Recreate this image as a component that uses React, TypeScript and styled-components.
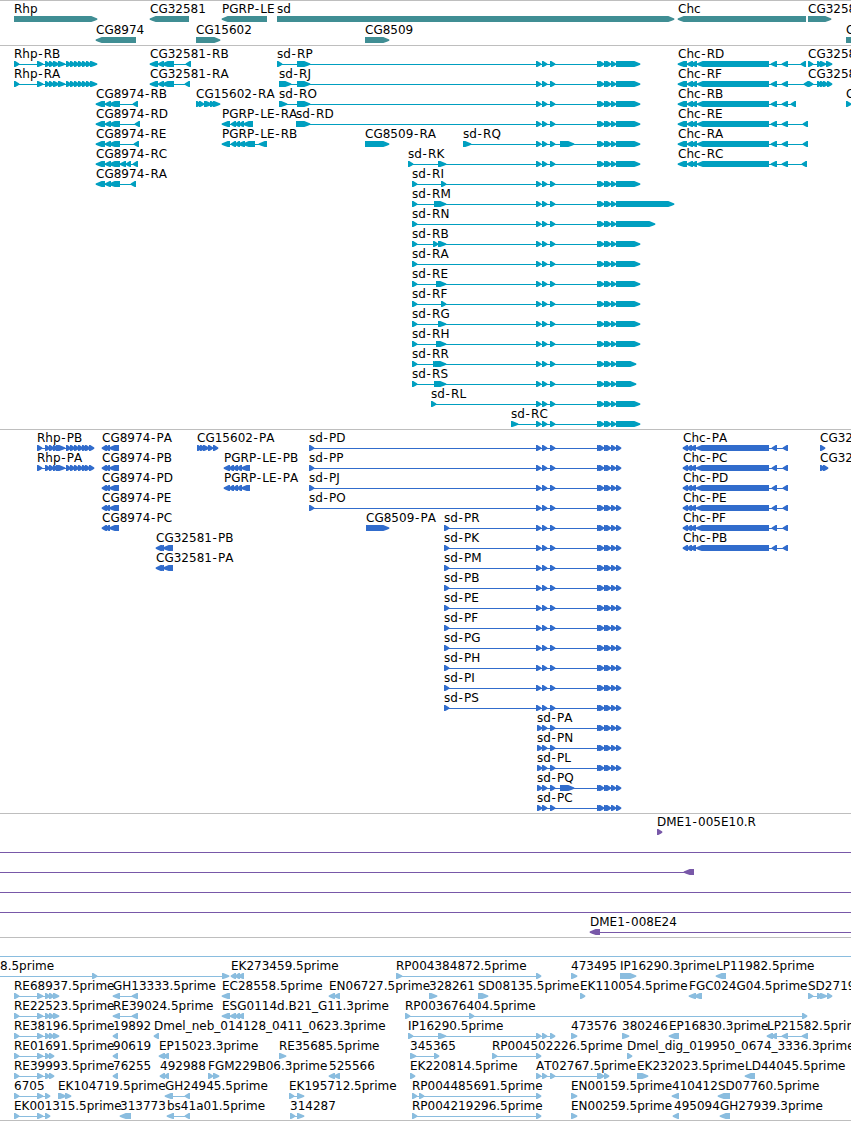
import React from "react";
import styled, { createGlobalStyle } from "styled-components";

const GlobalStyle = createGlobalStyle`
  body { margin: 0; background: #fff; overflow: hidden; }
`;

const Browser = styled.main`
  display: flex;
  flex-direction: column;
  width: 851px;
  height: 1121px;
  overflow: hidden;
  background: #fff;
  border-top: 1px solid #bebebe;
  box-sizing: border-box;
`;

const Track = styled.section<{ $color: string; $bottom: number }>`
  display: flex;
  flex-direction: column;
  flex: none;
  padding: 1px 0 ${(p) => p.$bottom}px;
  border-bottom: 1px solid #bebebe;
  color: ${(p) => p.$color};
`;

const Lane = styled.svg<{ $height: number }>`
  display: block;
  flex: none;
  width: 851px;
  height: ${(p) => p.$height}px;
  overflow: visible;
  fill: currentColor;
`;

const Label = styled.text`
  font: 12px "DejaVu Sans", Verdana, sans-serif;
  font-kerning: none;
  fill: #000;
  white-space: pre;
`;

type Feature = {
  label: string;
  x: number;
  dir: 1 | -1;
  exons: [number, number][];
  from: number;
  to: number;
};

/** Builds a feature from its name, strand and a "start-end start-end" exon list. */
function ft(label: string, strand: "+" | "-", exons: string, opts: { x?: number; from?: number; to?: number } = {}): Feature {
  const list = exons.split(" ").map((e) => e.split("-").map(Number) as [number, number]);
  return {
    label,
    dir: strand === "+" ? 1 : -1,
    exons: list,
    x: opts.x ?? list[0][0],
    from: opts.from ?? list[0][0],
    to: opts.to ?? list[list.length - 1][1],
  };
}

const line = (from = 0, to = 851): Feature => ({ label: "", x: 0, dir: 1, exons: [], from, to });

/** Outline of an exon: a box whose leading end tapers to a blunt point. */
function exonPoints([a, b]: [number, number], dir: 1 | -1) {
  const tip = Math.min(b - a - 1, 6);
  const [tail, head] = dir === 1 ? [a, b + 0.3] : [b, a - 0.3];
  const neck = head - dir * tip;
  const mid = head - dir * tip * 0.4;
  return `${tail},14 ${neck},14 ${mid},15.4 ${head},16.4 ${head},17.8 ${mid},18.7 ${neck},20 ${tail},20`;
}

/** Gives hyphens a little room on both sides. */
function hyphenGaps(label: string) {
  if (!label.includes("-")) return undefined;
  return [...label].map((c, i) => (c === "-" ? 0.7 : label[i - 1] === "-" ? 1.1 : 0)).join(" ");
}

const FeatureGlyph = ({ f }: { f: Feature }) => (
  <g>
    {(f.exons.length !== 1 || f.from !== f.exons[0][0] || f.to !== f.exons[0][1]) && (
      <rect x={f.from} y={17} width={f.to - f.from} height={1} shapeRendering="crispEdges" />
    )}
    {f.exons.map((e, i) => (
      <polygon key={i} points={exonPoints(e, f.dir)} />
    ))}
    {f.label && <Label x={f.x} y={11} dx={hyphenGaps(f.label)}>{f.label}</Label>}
  </g>
);

const TrackView = ({ color, rows, rowHeight = 20, bottom = 2 }: { color: string; rows: Feature[][]; rowHeight?: number; bottom?: number }) => (
  <Track $color={color} $bottom={bottom}>
    {rows.map((row, i) => (
      <Lane key={i} $height={rowHeight}>
        {row.map((f, j) => (
          <FeatureGlyph key={j} f={f} />
        ))}
      </Lane>
    ))}
  </Track>
);

const genes: Feature[][] = [
  [
    ft("Rhp", "+", "14-97"),
    ft("CG32581", "-", "150-189"),
    ft("PGRP-LE", "-", "222-267"),
    ft("sd", "+", "277-674"),
    ft("Chc", "-", "678-806"),
    ft("CG3258", "+", "808-831"),
  ],
  [
    ft("CG8974", "-", "96-136"),
    ft("CG15602", "+", "196-220"),
    ft("CG8509", "+", "365-389"),
    ft("C", "+", "846-870"),
  ],
];

const rhpR = "14-19 37-43 45-50 49-54 53-59 58-65 66-71 70-75 74-79 78-83 82-87 86-91 90-97";
const sdMid = "536-541 542-547 550-555";
const sdEnd = "597-602 599-604 604-609 606-611 611-616";
const sdR = (n: string, head: string, end = 640, extra = "") =>
  ft(`sd-${n}`, "+", `${head} ${sdMid}${extra} ${sdEnd} 616-${end}`);
const chcR = (n: string, tail: string) => ft(`Chc-${n}`, "-", `678-687 687-693 691-697 697-769 771-777 782-788 ${tail}`);
const cg8974R = (n: string, tail: string) => ft(`CG8974-${n}`, "-", `96-105 105-111 109-120 ${tail}`);

const transcripts: Feature[][] = [
  [
    ft("Rhp-RB", "+", rhpR),
    ft("CG32581-RB", "-", "150-158 158-164 162-174 186-191"),
    sdR("RP", "277-282 297-310"),
    chcR("RD", "801-806"),
    ft("CG3258", "+", "808-813 817-822 820-826 826-832"),
  ],
  [
    ft("Rhp-RA", "+", rhpR),
    ft("CG32581-RA", "-", "150-158 158-164 162-174 185-190"),
    sdR("RJ", "279-291 297-310"),
    chcR("RF", "804-809"),
    ft("CG3258", "+", "808-813 817-822 820-825 823-828 827-832"),
  ],
  [
    cg8974R("RB", "133-138"),
    ft("CG15602-RA", "+", "196-201 199-204 204-212 210-215 213-220"),
    sdR("RO", "279-287 297-310"),
    chcR("RB", "791-796"),
    ft("C", "+", "846-851"),
  ],
  [
    cg8974R("RD", "135-140"),
    ft("PGRP-LE-RA", "-", "222-230 231-236 235-240 239-244 243-253"),
    sdR("RD", "296-310"),
    chcR("RE", "803-808"),
  ],
  [
    cg8974R("RE", "134-139"),
    ft("PGRP-LE-RB", "-", "222-230 231-236 235-240 238-245 243-255 259-267"),
    ft("CG8509-RA", "+", "365-389"),
    sdR("RQ", "463-471", 640, " 560-574"),
    chcR("RA", "803-808"),
  ],
  [cg8974R("RC", "120-126 126-131 133-138"), sdR("RK", "408-413 438-446"), chcR("RC", "802-807")],
  [cg8974R("RA", "131-136"), sdR("RI", "412-417 441-446")],
  [sdR("RM", "412-417 434-446", 674)],
  [sdR("RN", "412-417", 655)],
  [sdR("RB", "412-417 433-438 438-446")],
  [sdR("RA", "412-417")],
  [sdR("RE", "412-417 436-446")],
  [sdR("RF", "412-417 441-446")],
  [sdR("RG", "412-417 438-446")],
  [sdR("RH", "412-417 436-446")],
  [sdR("RR", "412-417 433-438 435-446", 636)],
  [sdR("RS", "412-417 434-446", 636)],
  [sdR("RL", "431-436")],
  [sdR("RC", "511-518")],
];

const rhpP = "37-42 45-50 49-54 53-58 56-65 66-71 70-75 74-79 78-83 82-87 85-90 89-94";
const sdP = (n: string, head: string, mid = sdMid) => ft(`sd-${n}`, "+", `${head}${mid} ${sdEnd} 616-621`);
const chcP = (n: string) => ft(`Chc-${n}`, "-", "683-688 687-692 690-696 696-769 772-777 783-788");
const cg8974P = (n: string) => ft(`CG8974-${n}`, "-", "102-107 105-110 109-119");
const pgrpP = (n: string) => ft(`PGRP-LE-${n}`, "-", "224-230 229-234 233-238 237-242 241-250");
const cg32581P = (n: string) => ft(`CG32581-${n}`, "-", "156-162 159-164 163-173");
const shortMid = "537-542 542-547 550-555";

const proteins: Feature[][] = [
  [
    ft("Rhp-PB", "+", rhpP),
    cg8974P("PA"),
    ft("CG15602-PA", "+", "197-202 200-205 203-209 208-213 213-218"),
    sdP("PD", "309-314 "),
    chcP("PA"),
    ft("CG32", "+", "820-825"),
  ],
  [ft("Rhp-PA", "+", rhpP), cg8974P("PB"), pgrpP("PB"), sdP("PP", "309-314 "), chcP("PC"), ft("CG32", "+", "820-825 823-828")],
  [cg8974P("PD"), pgrpP("PA"), sdP("PJ", "309-314 "), chcP("PD")],
  [cg8974P("PE"), sdP("PO", "309-314 "), chcP("PE")],
  [cg8974P("PC"), ft("CG8509-PA", "+", "366-389"), sdP("PR", "444-449 "), chcP("PF")],
  [cg32581P("PB"), sdP("PK", "444-449 "), chcP("PB")],
  [cg32581P("PA"), sdP("PM", "444-449 ")],
  ...["PB", "PE", "PF", "PG", "PH", "PI", "PS"].map((n) => [sdP(n, "444-449 ")]),
  [sdP("PA", "", shortMid)],
  [sdP("PN", "", shortMid)],
  [sdP("PL", "", shortMid)],
  [sdP("PQ", "", shortMid + " 560-574")],
  [sdP("PC", "", shortMid)],
];

const clones: Feature[][] = [
  [ft("DME1-005E10.R", "+", "657-662")],
  [line()],
  [ft("", "-", "684-694", { from: 0 })],
  [line()],
  [line()],
  [ft("DME1-008E24", "-", "590-600", { to: 851 })],
];

const re5 = "14-19 37-43 45-50 49-54 53-59";
const re4 = "14-19 37-43 45-50 49-54";
const re3 = "14-19 37-43 45-50";

const ests: Feature[][] = [
  [line()],
  [
    ft("8.5prime", "+", "92-97 222-229", { x: 0, from: 0 }),
    ft("EK273459.5prime", "-", "231-236 235-240 238-244"),
    ft("RP004384872.5prime", "+", "396-402 536-541"),
    ft("473495", "+", "571-577"),
    ft("IP16290.3prime", "+", "620-636"),
    ft("LP11982.5prime", "-", "716-726"),
  ],
  [
    ft("RE68937.5prime", "+", re5),
    ft("GH13333.5prime", "-", "113-120 132-138"),
    ft("EC28558.5prime", "-", "222-230"),
    ft("EN06727.5prime", "-", "329-335 334-340"),
    ft("328261", "+", "429-437"),
    ft("SD08135.5prime", "+", "478-488"),
    ft("EK110054.5prime", "+", "580-585"),
    ft("FGC024G04.5prime", "-", "689-696 694-702"),
    ft("SD2719", "+", "808-813 817-823 820-827 827-832"),
  ],
  [
    ft("RE22523.5prime", "+", re5),
    ft("RE39024.5prime", "-", "113-120 132-138"),
    ft("ESG0114d.B21_G11.3prime", "-", "222-230 230-236 235-240 238-244"),
    ft("RP003676404.5prime", "+", "405-410 469-474 802-807"),
  ],
  [
    ft("RE38196.5prime", "+", re5),
    ft("19892", "-", "113-118"),
    ft("Dmel_neb_014128_0411_0623.3prime", "-", "154-159"),
    ft("IP16290.5prime", "+", "408-413 438-446 536-541 542-547 550-555"),
    ft("473576", "+", "571-577"),
    ft("380246", "+", "622-629"),
    ft("EP16830.3prime", "-", "669-679"),
    ft("LP21582.5prime", "-", "767-773 771-777 782-788 802-808"),
  ],
  [
    ft("RE01691.5prime", "+", re4),
    ft("90619", "-", "113-118"),
    ft("EP15023.3prime", "-", "159-165 163-169"),
    ft("RE35685.5prime", "+", "279-286"),
    ft("345365", "+", "410-416 434-439"),
    ft("RP004502226.5prime", "+", "492-497 536-541"),
    ft("Dmel_dig_019950_0674_3336.3prime", "+", "627-632"),
  ],
  [
    ft("RE39993.5prime", "+", re4),
    ft("76255", "-", "113-118"),
    ft("492988", "-", "160-165 164-169"),
    ft("FGM229B06.3prime", "+", "208-213 213-219"),
    ft("525566", "-", "329-335 334-340"),
    ft("EK220814.5prime", "+", "410-415"),
    ft("AT02767.5prime", "+", "536-541 542-547 550-555 597-602 599-604 604-609"),
    ft("EK232023.5prime", "+", "637-648"),
    ft("LD44045.5prime", "-", "745-755"),
  ],
  [
    ft("6705", "+", re3),
    ft("EK104719.5prime", "+", "58-66 65-71"),
    ft("GH24945.5prime", "-", "165-173 185-190"),
    ft("EK195712.5prime", "+", "289-294 297-304"),
    ft("RP004485691.5prime", "+", "412-417 419-424 536-541"),
    ft("EN00159.5prime", "+", "571-577"),
    ft("410412", "-", "672-679"),
    ft("SD07760.5prime", "-", "718-730"),
  ],
  [
    ft("EK001315.5prime", "+", re3),
    ft("313773", "-", "120-131"),
    ft("bs41a01.5prime", "-", "167-174 185-190"),
    ft("314287", "+", "290-295 297-304"),
    ft("RP004219296.5prime", "+", "412-417 536-541"),
    ft("EN00259.5prime", "+", "571-577"),
    ft("495094", "-", "673-679", { x: 674 }),
    ft("GH27939.3prime", "-", "720-730"),
  ],
];

export default function App() {
  return (
    <>
      <GlobalStyle />
      <Browser>
        <TrackView color="#408e94" rows={genes} rowHeight={21} bottom={1} />
        <TrackView color="#009fc0" rows={transcripts} />
        <TrackView color="#316ccc" rows={proteins} />
        <TrackView color="#7858a8" rows={clones} />
        <TrackView color="#8abddf" rows={ests} bottom={1} />
      </Browser>
    </>
  );
}
